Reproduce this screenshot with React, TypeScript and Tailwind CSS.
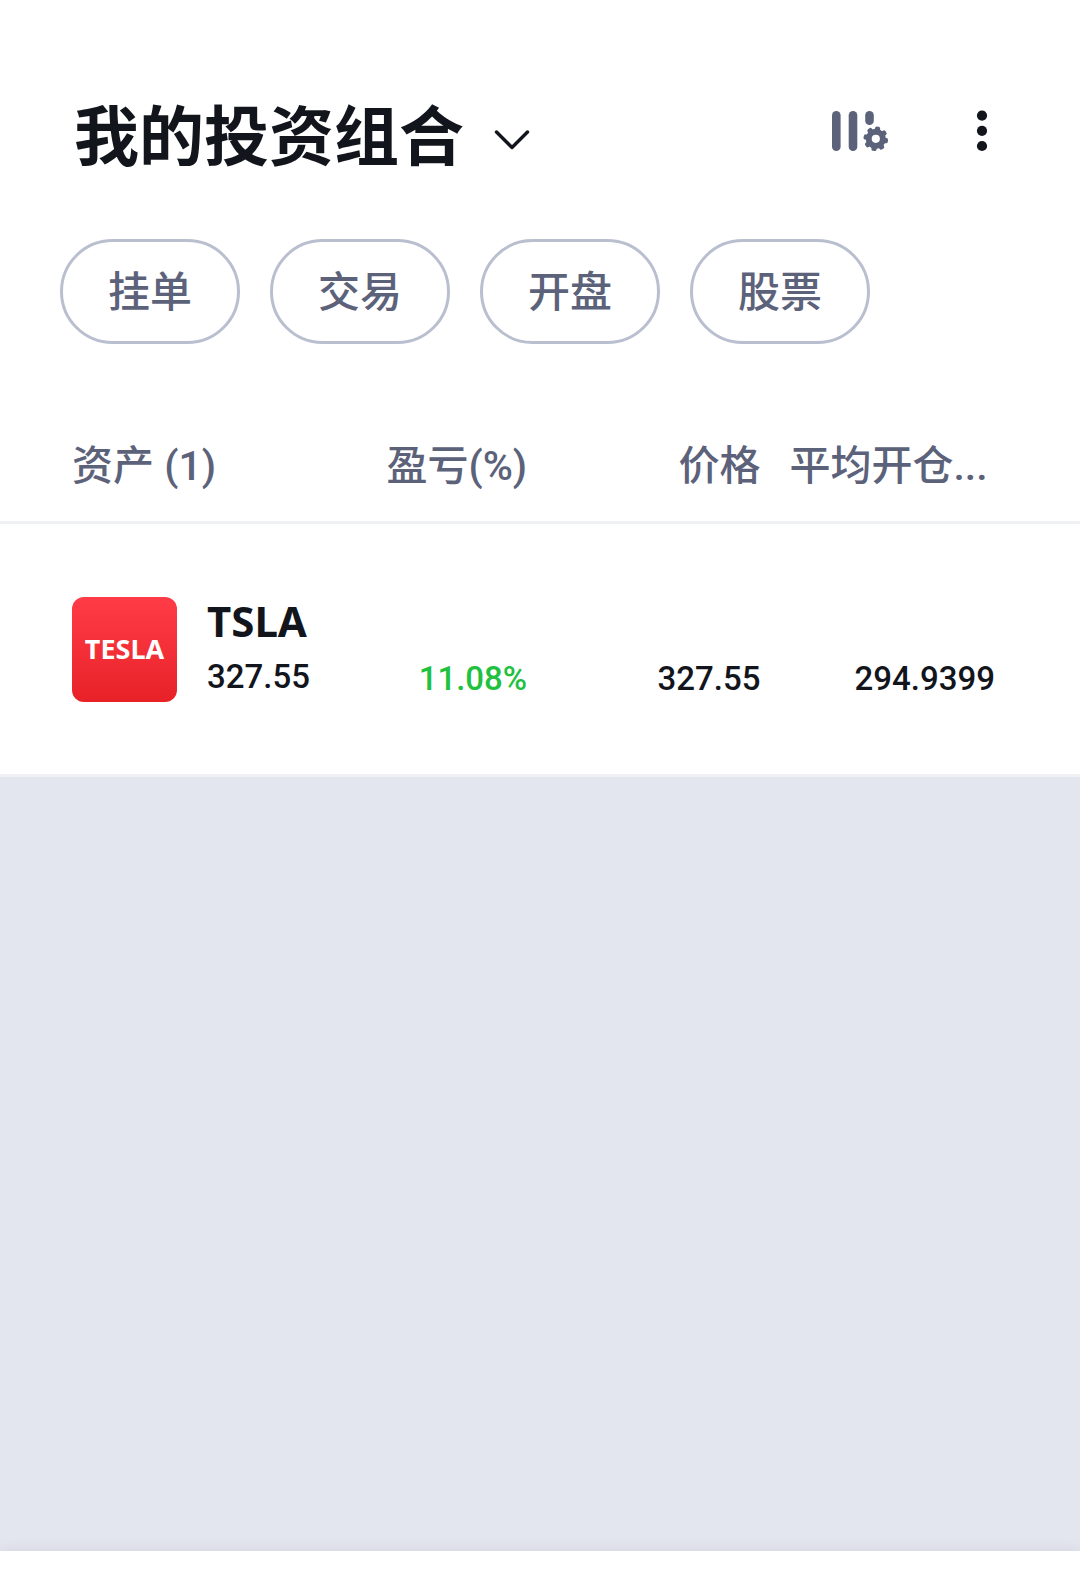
import { clsx } from "clsx";

const filters = ["挂单", "交易", "开盘", "股票"];

const columns = [
  { label: "资产 (1)", className: "w-[28.5%] pl-[72px] text-left" },
  { label: "盈亏(%)", className: "w-[21.7%] pr-[15px] text-right" },
  { label: "价格", className: "w-[21.6%] pr-[15px] text-right" },
  { label: "平均开仓...", className: "pl-[14px] text-left" },
];

const assets = [
  {
    symbol: "TSLA",
    brand: "TESLA",
    value: "327.55",
    change: "11.08%",
    price: "327.55",
    average: "294.9399",
  },
];

const gearTeeth = [10, 55, 100, 145, 190, 235, 280, 325];

function ColumnSettingsIcon() {
  return (
    <svg width="60" height="44" viewBox="0 0 60 44" fill="currentColor">
      <rect x="2" y="2" width="8.6" height="40" rx="4.3" />
      <rect x="18.7" y="2" width="8.6" height="40" rx="4.3" />
      <rect x="35.2" y="2" width="8.6" height="14" rx="4.3" />
      <circle
        cx="45.8"
        cy="29.8"
        r="7.1"
        fill="none"
        stroke="currentColor"
        strokeWidth="6"
      />
      {gearTeeth.map((angle) => (
        <rect
          key={angle}
          x="43.2"
          y="17.5"
          width="5.2"
          height="6"
          rx="1.8"
          transform={`rotate(${angle} 45.8 29.8)`}
        />
      ))}
    </svg>
  );
}

function MoreIcon() {
  return (
    <svg width="12" height="44" viewBox="0 0 12 44" fill="currentColor">
      <circle cx="6" cy="6.6" r="5.1" />
      <circle cx="6" cy="21.8" r="5.1" />
      <circle cx="6" cy="37" r="5.1" />
    </svg>
  );
}

function ChevronIcon() {
  return (
    <svg
      width="36"
      height="22"
      viewBox="0 0 36 22"
      fill="none"
      stroke="currentColor"
      strokeWidth="3.4"
      strokeLinecap="round"
      strokeLinejoin="round"
    >
      <path d="M2.5 3 18 18.5 33.5 3" />
    </svg>
  );
}

function Header() {
  return (
    <header className="flex items-center justify-between pt-[90px] pr-[92px] pl-[74px]">
      <h1 className="text-[65px] leading-[96px] font-bold">
        <button type="button" className="flex items-center gap-[30px]">
          我的投资组合
          <span className="pt-1">
            <ChevronIcon />
          </span>
        </button>
      </h1>
      <div className="flex items-center gap-[86px] pb-[14px]">
        <button type="button" aria-label="列设置" className="text-[#5c627a]">
          <ColumnSettingsIcon />
        </button>
        <button type="button" aria-label="更多">
          <MoreIcon />
        </button>
      </div>
    </header>
  );
}

function Filters() {
  return (
    <nav className="flex flex-wrap gap-[30px] px-[60px] pt-[53px]">
      {filters.map((filter) => (
        <button
          key={filter}
          type="button"
          className="h-[105px] rounded-full border-[3px] border-[#b9bfcf] px-[45px] pt-[2px] text-[42px] leading-[60px] font-medium text-[#5c627a]"
        >
          {filter}
        </button>
      ))}
    </nav>
  );
}

function AssetTable() {
  return (
    <table className="mt-[86px] w-full table-fixed border-collapse">
      <thead>
        <tr className="border-b-[3px] border-[#f0f1f5] text-[41px] leading-[60px] text-[#5c627a]">
          {columns.map((column) => (
            <th
              key={column.label}
              scope="col"
              className={clsx(
                "pt-[6px] pb-[25px] font-medium whitespace-nowrap",
                column.className
              )}
            >
              {column.label}
            </th>
          ))}
        </tr>
      </thead>
      <tbody>
        {assets.map((asset) => (
          <tr
            key={asset.symbol}
            className="h-[253px] border-b-[3px] border-[#eff1f5] text-[33px] leading-[50px] font-medium"
          >
            <td className="pl-[72px]">
              <div className="flex items-center gap-[30px]">
                <div className="flex size-[105px] shrink-0 items-center justify-center rounded-xl bg-linear-to-b from-[#ff3b47] to-[#e82127] font-['Noto_Sans'] text-[27px] font-bold text-white">
                  {asset.brand}
                </div>
                <div>
                  <div className="font-['Noto_Sans'] text-[42px] font-bold">
                    {asset.symbol}
                  </div>
                  <div className="pt-[6px]">{asset.value}</div>
                </div>
              </div>
            </td>
            <td className="pt-[59px] pr-[15px] text-right text-[#1fc13f]">
              {asset.change}
            </td>
            <td className="pt-[59px] pr-[15px] text-right">{asset.price}</td>
            <td className="pt-[59px] pr-[85px] text-right">{asset.average}</td>
          </tr>
        ))}
      </tbody>
    </table>
  );
}

export default function App() {
  return (
    <div className="flex min-h-screen flex-col bg-[#e3e6ef] font-[Roboto,'Noto_Sans_CJK_SC',sans-serif] text-[#12151c]">
      <main className="bg-white">
        <Header />
        <Filters />
        <AssetTable />
      </main>
      <footer className="mt-auto h-10 bg-white shadow-[0_0_16px_rgba(0,0,0,0.08)]" />
    </div>
  );
}
